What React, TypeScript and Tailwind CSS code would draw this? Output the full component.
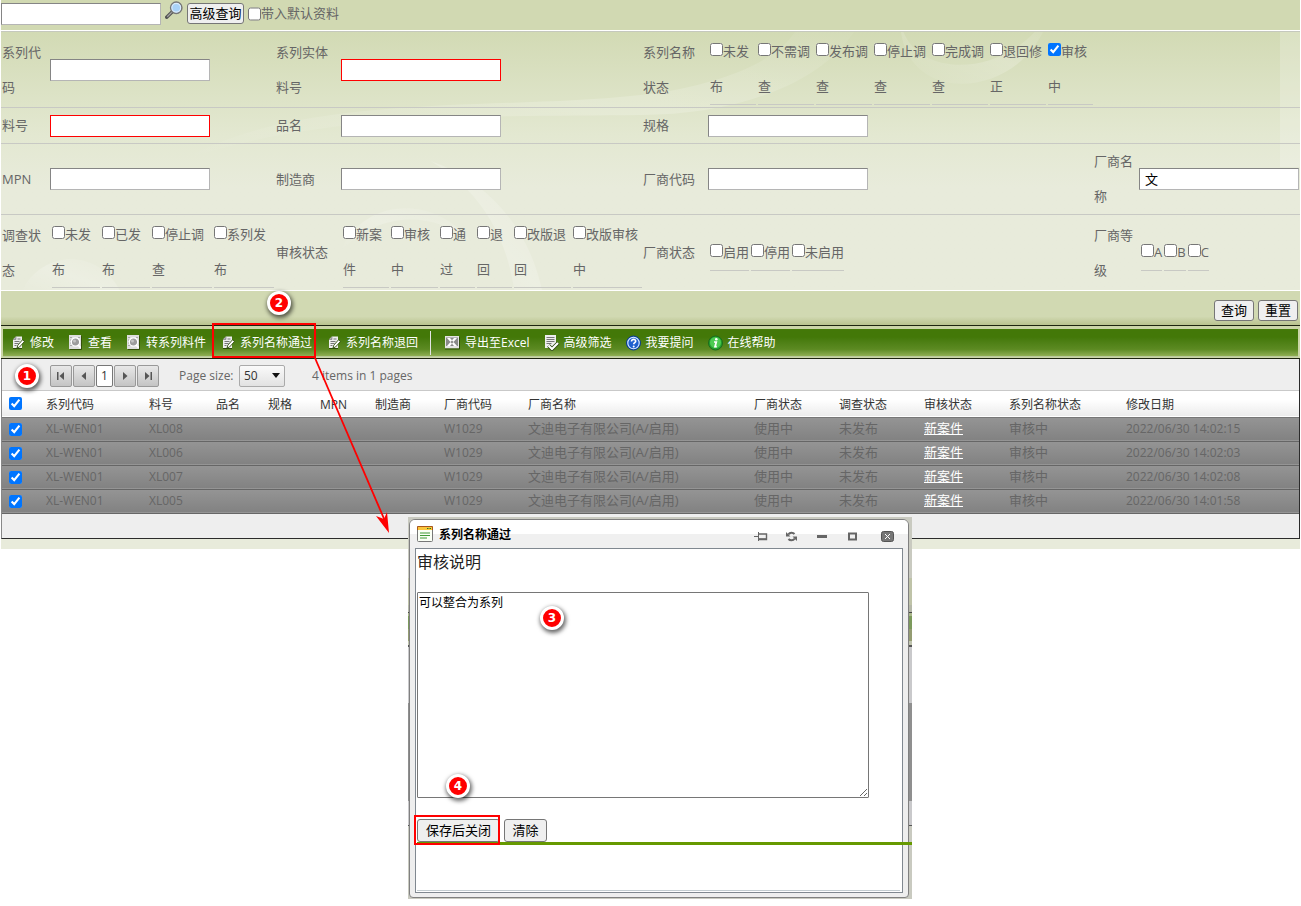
import React from 'react'

interface Option {
  label: string
  rest?: string
  width?: string
  checked?: boolean
}

interface Column {
  title: string
  width: string
}

const seriesStates: Option[] = [
  { label: '未发', rest: '布', width: 'w-[46px]' },
  { label: '不需调', rest: '查', width: 'w-[56px]' },
  { label: '发布调', rest: '查', width: 'w-[56px]' },
  { label: '停止调', rest: '查', width: 'w-[56px]' },
  { label: '完成调', rest: '查', width: 'w-[56px]' },
  { label: '退回修', rest: '正', width: 'w-[56px]' },
  { label: '审核', rest: '中', width: 'w-[45px]', checked: true }
]

const surveyStates: Option[] = [
  { label: '未发', rest: '布', width: 'w-[48px]' },
  { label: '已发', rest: '布', width: 'w-[48px]' },
  { label: '停止调', rest: '查', width: 'w-[60px]' },
  { label: '系列发', rest: '布', width: 'w-[60px]' }
]

const auditStates: Option[] = [
  { label: '新案', rest: '件', width: 'w-[46px]' },
  { label: '审核', rest: '中', width: 'w-[47px]' },
  { label: '通', rest: '过', width: 'w-[35px]' },
  { label: '退', rest: '回', width: 'w-[35px]' },
  { label: '改版退', rest: '回', width: 'w-[57px]' },
  { label: '改版审核', rest: '中', width: 'w-[69px]' }
]

const vendorStates: Option[] = [{ label: '启用' }, { label: '停用' }, { label: '未启用' }]

const vendorGrades: Option[] = [{ label: 'A' }, { label: 'B' }, { label: 'C' }]

const columns: Column[] = [
  { title: '系列代码', width: 'w-[103px]' },
  { title: '料号', width: 'w-[67px]' },
  { title: '品名', width: 'w-[52px]' },
  { title: '规格', width: 'w-[52px]' },
  { title: 'MPN', width: 'w-[55px]' },
  { title: '制造商', width: 'w-[69px]' },
  { title: '厂商代码', width: 'w-[84px]' },
  { title: '厂商名称', width: '' },
  { title: '厂商状态', width: 'w-[85px]' },
  { title: '调查状态', width: 'w-[85px]' },
  { title: '审核状态', width: 'w-[85px]' },
  { title: '系列名称状态', width: 'w-[117px]' },
  { title: '修改日期', width: 'w-[181px]' }
]

const rows = [
  { part: 'XL008', date: '2022/06/30 14:02:15' },
  { part: 'XL006', date: '2022/06/30 14:02:03' },
  { part: 'XL007', date: '2022/06/30 14:02:08' },
  { part: 'XL005', date: '2022/06/30 14:01:58' }
]

const fieldBase = 'h-[22px] w-[160px] border bg-white pl-[5px] text-[13px] text-black outline-none'
const fieldPlain = 'border-t-[#858585] border-l-[#858585] border-r-[#b5b5b5] border-b-[#b5b5b5]'
const pushButton = 'rounded-[3px] border border-[#767676] bg-[#efefef] text-black whitespace-nowrap'
const rowGrid =
  'grid grid-cols-[48px_226fr_65px_302fr_65px_386fr_45px_161px] items-center border-b pl-px leading-[35px]'

const Field: React.FC<{ id: string; red?: boolean; value?: string }> = ({ id, red, value }) => (
  <input
    id={id}
    type="text"
    defaultValue={value}
    className={red ? `${fieldBase} border-[#f00]` : `${fieldBase} ${fieldPlain}`}
  />
)

const Options: React.FC<{ name: string; items: Option[] }> = ({ name, items }) => (
  <div role="group" aria-label={name} className="flex gap-[2px] pl-[2px]">
    {items.map((item) => (
      <label
        key={item.label}
        className={`shrink-0 border-b border-[#c8c9c4] whitespace-nowrap ${item.width ?? ''}`}
      >
        <input type="checkbox" defaultChecked={item.checked} />
        {item.label}
        {item.rest && <br />}
        {item.rest}
      </label>
    ))}
  </div>
)

const PageEditIcon: React.FC = () => (
  <svg className="h-4 w-4 shrink-0" viewBox="0 0 16 16">
    <path d="M6 1.500h6v11.500H3V4.500z" fill="#eee" />
    <path d="M6 1.500v3H3" fill="#aaa" stroke="#777" strokeWidth=".6" />
    <path d="M7.500 4h3M4.500 6.500h5M4.500 8.500h4M4.500 10.500h2" stroke="#777" />
    <path d="M3 13.500h9" stroke="#2d4d08" />
    <path d="M7 13l.8-2.800 4.700-5.400L14.500 6.500 9.500 12z" fill="#fff" stroke="#2d4d08" strokeWidth=".9" />
  </svg>
)

const PageViewIcon: React.FC = () => (
  <svg className="h-4 w-4 shrink-0" viewBox="0 0 16 16">
    <path d="M1 0h12v14H1z" fill="#dedede" />
    <path d="M2 2.500h2M2 5h2M2 8h2M2 10.500h3M10 2.500h2" stroke="#aaa" />
    <circle cx="7.500" cy="7" r="4.200" fill="#9c9c9c" stroke="#fff" strokeWidth="1.200" />
    <circle cx="6.500" cy="6" r="1.500" fill="#c4c4c4" />
    <path d="M10.200 10l2.500 2.800" stroke="#fff" strokeWidth="1.800" />
    <path d="M13.500 1v13.500H2" fill="none" stroke="#345008" />
  </svg>
)

const ExcelIcon: React.FC = () => (
  <svg className="h-4 w-4 shrink-0" viewBox="0 0 16 16">
    <path d="M0 1h14v12.500H0z" fill="#e4e4e4" />
    <path d="M0 14h14.500V2" fill="none" stroke="#2d4d08" />
    <path d="M1 2.500h12v8.500H1z" fill="#8a8a8a" />
    <path d="M2 3h3l7 8H9zM12 3H9l-7 8h3z" fill="#fff" />
  </svg>
)

const FilterIcon: React.FC = () => (
  <svg className="h-4 w-4 shrink-0" viewBox="0 0 16 16">
    <path d="M1 0h11v13H1z" fill="#eee" />
    <path d="M2.500 2.500h8M2.500 4.500h8M2.500 6.500h8M2.500 8.500h5" stroke="#777" />
    <path d="M4.500 10.500l3.500 3.500 6-6" fill="none" stroke="#26420a" strokeWidth="3.800" />
    <path d="M4.500 10.500l3.500 3.500 6-6" fill="none" stroke="#fff" strokeWidth="2.200" />
  </svg>
)

const QuestionIcon: React.FC = () => (
  <svg className="h-4 w-4 shrink-0" viewBox="0 0 16 16">
    <circle cx="7.500" cy="8" r="7" fill="#1d60cf" stroke="#0d3d88" />
    <circle cx="7.500" cy="8" r="5.700" fill="none" stroke="#dcecff" strokeWidth="1.100" />
    <path d="M5.500 6.500c0-3 4.300-2.600 4.200-.3 0 1.300-2 1.500-2 3" fill="none" stroke="#fff" strokeWidth="1.600" />
    <circle cx="7.700" cy="11.400" r="1" fill="#fff" />
  </svg>
)

const InfoIcon: React.FC = () => (
  <svg className="h-4 w-4 shrink-0" viewBox="0 0 16 16">
    <circle cx="7.500" cy="8" r="7" fill="#23a02e" stroke="#1c6b1c" />
    <circle cx="7.500" cy="7.500" r="5.500" fill="#4ccb52" />
    <circle cx="8.300" cy="4.300" r="1.300" fill="#fff" />
    <path d="M6 7h2.300L7 11.700h1.800" fill="none" stroke="#fff" strokeWidth="1.700" />
  </svg>
)

const toolsLeft = [
  { label: '修改', icon: <PageEditIcon /> },
  { label: '查看', icon: <PageViewIcon /> },
  { label: '转系列料件', icon: <PageViewIcon /> },
  { label: '系列名称通过', icon: <PageEditIcon /> },
  { label: '系列名称退回', icon: <PageEditIcon /> }
]

const toolsRight = [
  { label: '导出至Excel', icon: <ExcelIcon /> },
  { label: '高级筛选', icon: <FilterIcon /> },
  { label: '我要提问', icon: <QuestionIcon /> },
  { label: '在线帮助', icon: <InfoIcon /> }
]

const ToolButton: React.FC<{ label: string; icon: React.ReactNode }> = ({ label, icon }) => (
  <button type="button" className="flex items-center gap-1 whitespace-nowrap">
    {icon}
    {label}
  </button>
)

const Badge: React.FC<{ n: number; className: string }> = ({ n, className }) => (
  <span
    className={`absolute z-20 flex h-6 w-6 items-center justify-center rounded-full border-[3px] border-white bg-[#f00] font-['DejaVu_Sans',sans-serif] text-xs font-bold text-white shadow-[1px_2px_4px_1px_rgba(0,0,0,0.6)] ${className}`}
  >
    {n}
  </span>
)

const SearchPanel: React.FC = () => (
  <form className="text-[13px] text-[#666]">
    <div className="flex h-[30px] items-start bg-[#d1d9b2] pt-[3px]">
      <input aria-label="查询" type="text" className={`${fieldBase} ${fieldPlain}`} />
      <svg className="-mt-[2px] ml-1 h-[18px] w-[18px]" viewBox="0 0 16 16">
        <path d="M1.500 14.500l5-5" stroke="#555" strokeWidth="3" strokeLinecap="round" />
        <path d="M2 14l4-4" stroke="#a5a5a5" strokeWidth="1" />
        <circle cx="10" cy="6" r="5" fill="#a9d2f8" stroke="#777" strokeWidth="1.400" />
        <circle cx="10" cy="6" r="3.900" fill="none" stroke="#dcecfc" />
      </svg>
      <button type="button" className={`${pushButton} ml-1 h-[21px] w-[57px] leading-[19px]`}>
        高级查询
      </button>
      <label className="ml-1 flex leading-5">
        <input type="checkbox" className="mt-[2px]" />
        带入默认资料
      </label>
    </div>
    <div className="relative overflow-hidden border-t border-white bg-linear-to-b from-[#d2dab4] via-[#e3e8d1] via-40% to-[#e8ebdb] to-60%">
      <svg
        className="absolute inset-0 h-full w-full"
        viewBox="0 0 1300 260"
        preserveAspectRatio="none"
        aria-hidden="true"
      >
        <defs>
          <linearGradient id="swirl" x1="0" x2="1" y1="1" y2="0">
            <stop offset="0" stopColor="#fff" stopOpacity="0" />
            <stop offset=".5" stopColor="#fff" stopOpacity=".2" />
            <stop offset="1" stopColor="#fff" stopOpacity=".03" />
          </linearGradient>
        </defs>
        <g fill="url(#swirl)">
          <path d="M180 130C300 60 500 80 640 64 740 52 790 20 800-10h60C830 50 740 84 640 84 500 86 320 80 180 130z" />
          <path d="M430 130c50 30 76 74 84 132h28c-12-60-50-110-112-132z" />
          <path d="M340 220c20-50 90-60 130-10-40-30-90-30-130 10z" />
          <path d="M900-10c10 60 110 60 150-10-20 90-150 100-150 10z" />
          <path d="M20 262c20-45 80-45 100 0z" />
        </g>
        <path d="M1280 0h20v136h-20z" fill="#fff" opacity=".2" />
      </svg>
      <div className={`relative h-[77px] border-t border-t-[#c5c8bd] border-[#c8c9c4] ${rowGrid}`}>
        <label htmlFor="series" className="pr-2">系列代码</label>
        <div className="flex"><Field id="series" /></div>
        <label htmlFor="entity" className="pr-3">系列实体料号</label>
        <div className="flex"><Field id="entity" red /></div>
        <span className="pr-3">系列名称状态</span>
        <Options name="系列名称状态" items={seriesStates} />
      </div>
      <div className={`relative h-[36px] border-[#c8c9c4] ${rowGrid}`}>
        <label htmlFor="part">料号</label>
        <div className="flex"><Field id="part" red /></div>
        <label htmlFor="name">品名</label>
        <div className="flex"><Field id="name" /></div>
        <label htmlFor="spec">规格</label>
        <div className="flex"><Field id="spec" /></div>
      </div>
      <div className={`relative h-[71px] border-[#c8c9c4] ${rowGrid}`}>
        <label htmlFor="mpn">MPN</label>
        <div className="flex"><Field id="mpn" /></div>
        <label htmlFor="maker">制造商</label>
        <div className="flex"><Field id="maker" /></div>
        <label htmlFor="vendor">厂商代码</label>
        <div className="flex"><Field id="vendor" /></div>
        <label htmlFor="vendorName" className="pr-1">厂商名称</label>
        <div className="flex"><Field id="vendorName" value="文" /></div>
      </div>
      <div className={`relative h-[76px] border-white ${rowGrid}`}>
        <span className="pr-2">调查状态</span>
        <Options name="调查状态" items={surveyStates} />
        <span>审核状态</span>
        <Options name="审核状态" items={auditStates} />
        <span>厂商状态</span>
        <Options name="厂商状态" items={vendorStates} />
        <span className="pr-1">厂商等级</span>
        <Options name="厂商等级" items={vendorGrades} />
      </div>
    </div>
    <div className="flex h-[34px] items-center justify-end gap-1 bg-linear-to-b from-[#d1d9b2] from-75% to-[#b9c38f] pt-1 pr-[2px]">
      <button type="submit" className={`${pushButton} h-[21px] px-[6px] leading-[19px]`}>查询</button>
      <button type="reset" className={`${pushButton} h-[21px] px-[6px] leading-[19px]`}>重置</button>
    </div>
  </form>
)

const Toolbar: React.FC = () => (
  <div className="border-y border-[#1d2410] bg-[#cbd5a8] px-[2px] pt-[3px] pb-px">
    <div className="flex h-7 items-center gap-[14px] border-b border-[#b9c99a] bg-linear-to-b from-[#437808] from-30% via-[#5c8a22] via-75% to-[#8fae52] pl-[7px] text-xs text-white">
      {toolsLeft.map((tool) => (
        <ToolButton key={tool.label} {...tool} />
      ))}
      <span className="-ml-[2px] h-6 w-px bg-[#e4e4e4]" />
      {toolsRight.map((tool) => (
        <ToolButton key={tool.label} {...tool} />
      ))}
    </div>
  </div>
)

const pagerButton =
  'flex h-[22px] w-[22px] items-center justify-center rounded-[2px] border border-[#999] bg-linear-to-b from-[#e8e8e8] to-[#c4c4c4] text-[#555]'

const Pager: React.FC = () => (
  <div className="flex h-8 items-center border-b border-[#c9c9c9] bg-[#eee] pt-[2px] pl-12 text-xs text-[#666]">
    <div className="flex gap-px">
      <button type="button" aria-label="First page" className={pagerButton}>
        <svg className="h-3 w-3" viewBox="0 0 12 12" fill="currentColor"><path d="M2 2h1.500v8H2zM9 2v8L4.500 6z" /></svg>
      </button>
      <button type="button" aria-label="Previous page" className={pagerButton}>
        <svg className="h-3 w-3" viewBox="0 0 12 12" fill="currentColor"><path d="M8 2v8L3.500 6z" /></svg>
      </button>
      <button type="button" className="h-[22px] w-[17px] rounded-[2px] border border-[#777] bg-white text-[#333]">1</button>
      <button type="button" aria-label="Next page" className={pagerButton}>
        <svg className="h-3 w-3" viewBox="0 0 12 12" fill="currentColor"><path d="M4 2v8l4.500-4z" /></svg>
      </button>
      <button type="button" aria-label="Last page" className={pagerButton}>
        <svg className="h-3 w-3" viewBox="0 0 12 12" fill="currentColor"><path d="M3 2v8l4.500-4zM8.500 2H10v8H8.500z" /></svg>
      </button>
    </div>
    <label htmlFor="pageSize" className="ml-5 w-[60px]">Page size:</label>
    <div className="relative">
      <select
        id="pageSize"
        className="h-[22px] w-[46px] appearance-none rounded-[2px] border border-[#aaa] bg-linear-to-b from-[#fafafa] to-[#e2e2e2] pl-1 text-[#333]"
      >
        <option>50</option>
      </select>
      <svg className="pointer-events-none absolute top-2 right-[5px] h-[5px] w-2" viewBox="0 0 8 5"><path d="M0 0h8L4 5z" fill="#111" /></svg>
    </div>
    <span className="ml-[27px]">4 items in 1 pages</span>
  </div>
)

const ResultTable: React.FC = () => (
  <table className="w-full table-fixed border-collapse text-left text-xs">
    <thead>
      <tr className="h-[26px] border-b border-[#777] bg-linear-to-b from-white from-35% to-[#ececec] text-[#333]">
        <th className="w-9 pl-[7px] font-normal">
          <input type="checkbox" aria-label="全选" defaultChecked className="block" />
        </th>
        {columns.map((col) => (
          <th key={col.title} className={`pt-[2px] pl-2 font-normal whitespace-nowrap ${col.width}`}>{col.title}</th>
        ))}
      </tr>
    </thead>
    <tbody>
      {rows.map((row) => (
        <tr
          key={row.part}
          className="h-6 border-b border-[#666] bg-linear-to-b from-[#959595] to-[#828282] whitespace-nowrap text-[#666]"
        >
          <td className="pl-[7px]">
            <input type="checkbox" aria-label={row.part} defaultChecked className="block" />
          </td>
          <td className="pl-2">XL-WEN01</td>
          <td className="pl-2">{row.part}</td>
          <td />
          <td />
          <td />
          <td />
          <td className="pl-2">W1029</td>
          <td className="pl-2 text-[13px]">文迪电子有限公司(A/启用)</td>
          <td className="pl-2 text-[13px]">使用中</td>
          <td className="pl-2 text-[13px]">未发布</td>
          <td className="pl-2 text-[13px]"><a href="#" className="text-white underline">新案件</a></td>
          <td className="pl-2 text-[13px]">审核中</td>
          <td className="pl-2">{row.date}</td>
        </tr>
      ))}
    </tbody>
  </table>
)

const ApproveDialog: React.FC = () => (
  <div className="absolute top-[517px] left-[408px] z-10 w-[504px] bg-[linear-gradient(#c9cac0_61px,#bfc3a8_61px_88px,#b5b8a8_88px_95px,#444_95px_96px,#a9b58a_96px_99px,#7c9a5c_99px_112px,#949c72_112px_124px,#c0c4ae_124px_128px,#555_128px_130px,#c9c9cb_130px_186px,#8f8f8f_186px_284px,#c9c9cb_284px_308px,#555_308px_309px,#c9cac0_309px)] pt-[2px] pr-[3px] pb-px pl-px">
    <div
      role="dialog"
      aria-label="系列名称通过"
      className="rounded-t-[6px] rounded-b-[4px] border border-[#808080] bg-[#eee] px-[5px] pb-1"
    >
      <div className="-mx-[5px] flex h-7 items-center rounded-t-[5px] bg-linear-to-b from-white from-50% to-[#f0f0f0] to-50% pr-[14px] pl-[7px]">
        <svg className="h-4 w-4" viewBox="0 0 16 16">
          <rect x=".5" y=".5" width="15" height="15" rx="1" fill="#fafff5" stroke="#777" />
          <path d="M1 1h14v3H1z" fill="#fbc63c" />
          <path d="M.500 4V.500h15V4" fill="none" stroke="#a8571c" />
          <path d="M10 2.500h1.500M12.500 2.500H14" stroke="#2c7d1c" strokeWidth="1.200" />
          <path d="M3 7h10M3 9.500h10M3 12h7" stroke="#3f9a35" />
        </svg>
        <h2 className="ml-[6px] flex-1 pt-[2px] text-xs font-bold text-black">系列名称通过</h2>
        <div className="flex items-center pt-1 text-[#666]">
          <button type="button" aria-label="Pin" className="mr-[18px]">
            <svg className="h-[11px] w-[14px]" viewBox="0 0 14 11" fill="none" stroke="currentColor">
              <path d="M0 5.500h4M4.500 1v9" />
              <path d="M5 3h7.500v5.500H5" strokeWidth="1.400" />
              <path d="M5 8h8" strokeWidth="1.600" />
            </svg>
          </button>
          <button type="button" aria-label="Reload" className="mr-5">
            <svg className="h-[11px] w-[11px]" viewBox="0 0 11 11" fill="none" stroke="currentColor" strokeWidth="2">
              <path d="M8.500 3C7 1.200 4 1 2.200 3.500M2.500 8c1.500 1.800 4.500 2 6.300-.5" />
              <path d="M0 1v4.500h4.500zM11 10V5.500H6.500z" fill="currentColor" stroke="none" />
            </svg>
          </button>
          <button type="button" aria-label="Minimize" className="mr-5">
            <svg className="h-[11px] w-[11px]" viewBox="0 0 11 11"><path d="M0 4h10v3H0z" fill="currentColor" /></svg>
          </button>
          <button type="button" aria-label="Maximize" className="mr-6">
            <svg className="h-[11px] w-[9px]" viewBox="0 0 9 11"><path d="M1 2.500h7v6H1z" fill="none" stroke="currentColor" strokeWidth="2" /></svg>
          </button>
          <button type="button" aria-label="Close">
            <svg className="h-[11px] w-[13px]" viewBox="0 0 13 11">
              <rect x=".5" y=".5" width="12" height="10" rx="2" fill="#777" stroke="#555" />
              <path d="M4 3l5 5M9 3L4 8" stroke="#fff" />
            </svg>
          </button>
        </div>
      </div>
      <div className="h-[345px] border border-[#808890] bg-white pt-px pl-px">
        <label htmlFor="remark" className="block text-base leading-6 text-[#222]">审核说明</label>
        <textarea
          id="remark"
          defaultValue="可以整合为系列"
          className="mt-[18px] block h-[206px] w-[452px] rounded-[1px] border border-[#767676] bg-white px-px py-[2px] text-xs text-black"
        />
        <div className="relative -mr-[10px] mt-[21px] flex gap-1 border-b-[3px] border-[#690]">
          <button type="button" className={`${pushButton} h-[23px] w-[83px] text-[13px] leading-[21px]`}>保存后关闭</button>
          <button type="button" className={`${pushButton} h-[23px] w-[43px] text-[13px] leading-[21px]`}>清除</button>
          <span className="pointer-events-none absolute -top-1 -left-[3px] h-[30px] w-[86px] border-2 border-[#f00]" />
        </div>
        <div className="mr-[2px] h-[46px] border-b border-[#c3ccd0]" />
      </div>
    </div>
    <Badge n={3} className="top-[89px] left-[132px]" />
    <Badge n={4} className="top-[257px] left-[38px]" />
  </div>
)

const App: React.FC = () => {
  return (
    <main className="relative min-h-screen overflow-hidden bg-white px-px font-['Open_Sans','Noto_Sans_CJK_SC',sans-serif]">
      <SearchPanel />
      <Toolbar />
      <div className="border-x border-b border-[#2b2b2b] border-l-[#888] bg-[#eee] pb-6">
        <Pager />
        <ResultTable />
      </div>
      <div className="h-[10px] bg-[#e8ebdb]" />

      <span className="pointer-events-none absolute top-[323px] left-[212px] h-[35px] w-[104px] border-2 border-[#f00]" />
      <svg className="pointer-events-none absolute top-[357px] left-[312px] z-20 h-[180px] w-[80px]" viewBox="0 0 80 180">
        <path d="M3 1l70 163" stroke="#f00" strokeWidth="1.800" />
        <path d="M77 176L64 159l8 3 3-7z" fill="#f00" />
      </svg>
      <Badge n={1} className="top-[364px] left-[15px]" />
      <Badge n={2} className="top-[291px] left-[267px]" />
      <ApproveDialog />
    </main>
  )
}

export default App
